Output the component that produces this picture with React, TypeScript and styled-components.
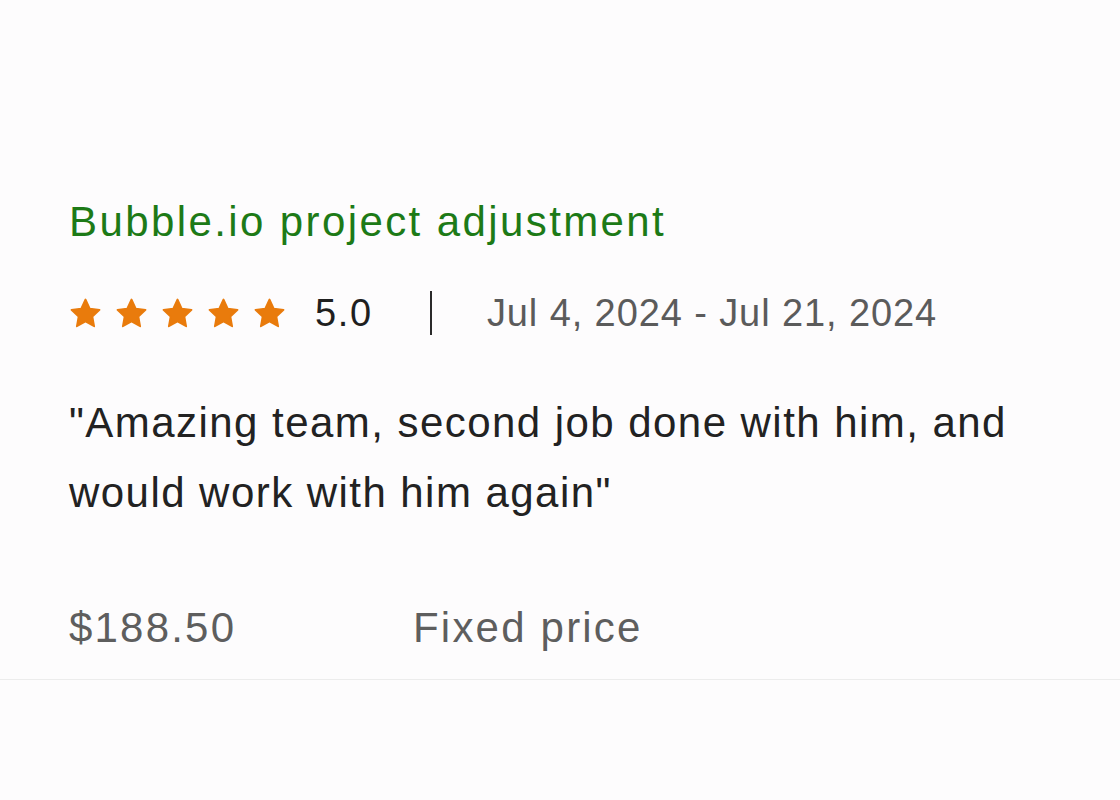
import React from 'react';
import styled, { createGlobalStyle } from 'styled-components';

const GlobalStyle = createGlobalStyle`
  html, body {
    margin: 0;
    padding: 0;
    background: #fdfcfd;
    font-family: "Liberation Sans", Arial, sans-serif;
  }
`;

const Page = styled.div`
  width: 1120px;
  height: 800px;
  overflow: hidden;
  background: #fdfcfd;
`;

const Card = styled.section`
  padding: 196px 0 0 0;
  border-bottom: 1px solid #ececec;
`;

const Inner = styled.div`
  padding: 0 69px;
`;

const Title = styled.h2`
  margin: 0;
  font-size: 42px;
  font-weight: 400;
  line-height: 52px;
  letter-spacing: 2.4px;
  color: #1d7a17;
`;

const MetaRow = styled.div`
  display: flex;
  align-items: center;
  margin-top: 39px;
  height: 52px;
`;

const Stars = styled.div`
  display: flex;
  gap: 13px;
`;

const Score = styled.span`
  margin-left: 29px;
  font-size: 38px;
  letter-spacing: 1.7px;
  color: #1f1f1f;
`;

const Divider = styled.span`
  width: 2px;
  height: 44px;
  background: #2a2a2a;
  margin: 0 55px 0 57px;
`;

const Dates = styled.span`
  font-size: 38px;
  letter-spacing: 0.9px;
  color: #5b5b5b;
`;

const Quote = styled.p`
  margin: 49px 0 0;
  font-size: 42px;
  line-height: 70px;
  letter-spacing: 1.45px;
  color: #222;
  max-width: 990px;
`;

const Footer = styled.div`
  display: flex;
  margin-top: 74px;
  padding-bottom: 25px;
  font-size: 42px;
  line-height: 52px;
  letter-spacing: 2.2px;
  color: #5e5e5e;
`;

const Amount = styled.span`
  width: 344px;
`;

const Star = () => (
  <svg width="33" height="33" viewBox="0 0 24 24">
    <path
      d="M12 1.8l3.1 6.6 7.1.9-5.2 4.9 1.3 7.1L12 17.8l-6.3 3.5 1.3-7.1-5.2-4.9 7.1-.9z"
      fill="#e97b0c"
      stroke="#e97b0c"
      strokeWidth="1.3"
      strokeLinejoin="round"
    />
  </svg>
);

const App: React.FC = () => {
  return (
    <Page>
      <GlobalStyle />
      <Card>
        <Inner>
          <Title>Bubble.io project adjustment</Title>
          <MetaRow>
            <Stars>
              {[0, 1, 2, 3, 4].map((i) => (
                <Star key={i} />
              ))}
            </Stars>
            <Score>5.0</Score>
            <Divider />
            <Dates>Jul 4, 2024 - Jul 21, 2024</Dates>
          </MetaRow>
          <Quote>"Amazing team, second job done with him, and would work with him again"</Quote>
          <Footer>
            <Amount>$188.50</Amount>
            <span>Fixed price</span>
          </Footer>
        </Inner>
      </Card>
    </Page>
  );
};

export default App;
